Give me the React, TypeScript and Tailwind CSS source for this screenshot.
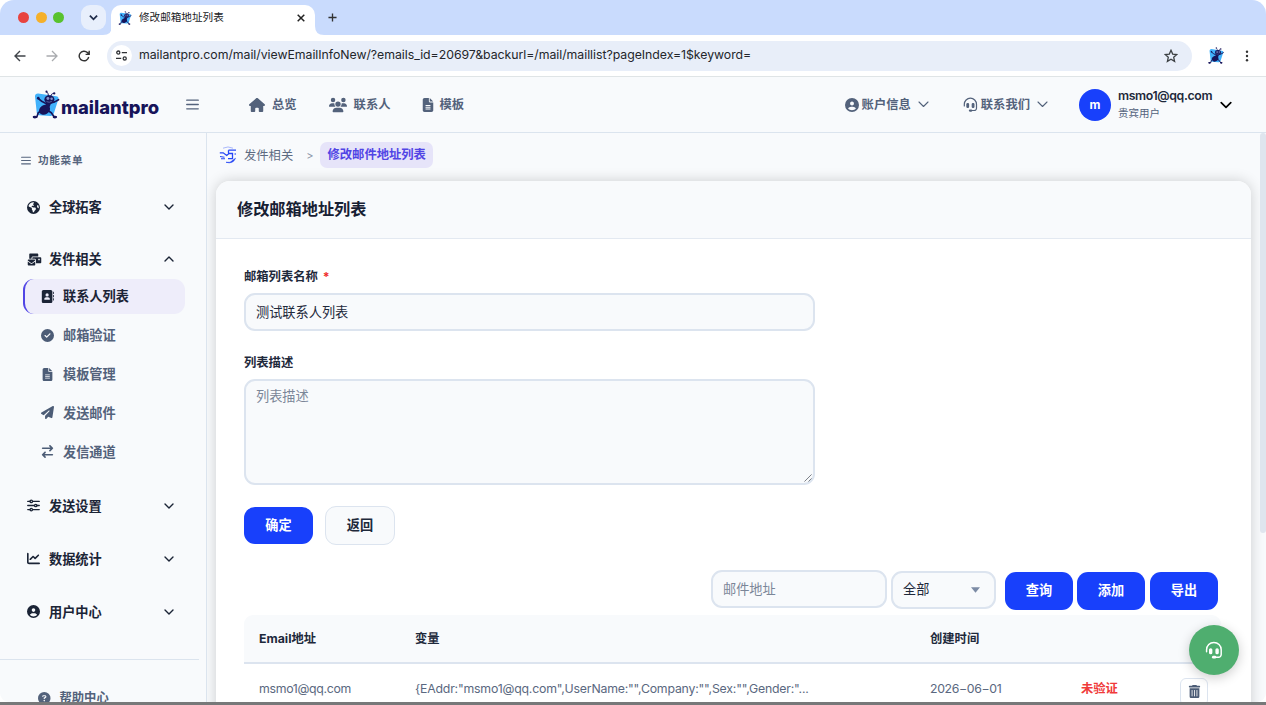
import type { ReactNode } from 'react';
import {
  FaAddressBook, FaArrowRightArrowLeft, FaChartLine, FaCircleCheck, FaCircleQuestion, FaCircleUser,
  FaEarthAmericas, FaEnvelopesBulk, FaFileLines, FaHouse, FaPaperPlane, FaUsers, FaTrashCan,
} from 'react-icons/fa6';

const Chevron = ({ up = false, className = '' }: { up?: boolean; className?: string }) => (
  <svg viewBox="0 0 10 10" className={className} fill="none" stroke="currentColor" strokeWidth="1.4" strokeLinecap="round" strokeLinejoin="round">
    <path d={up ? 'M1 7l4-4 4 4' : 'M1 3l4 4 4-4'} />
  </svg>
);

const ThinChevron = ({ className = '' }: { className?: string }) => (
  <svg viewBox="0 0 11 7" className={className} fill="none" stroke="currentColor" strokeWidth="1.1" strokeLinecap="round" strokeLinejoin="round">
    <path d="M1 1l4.500 4.500L10 1" />
  </svg>
);

const Ant = ({ className = '' }: { className?: string }) => (
  <svg viewBox="0 0 28 30" className={className} fill="none">
    <path d="M2.600 6.500Q2.800 3.500 6 3.700L24.500 6.500Q27.500 7 26.800 9.500L22 24.500Q21.200 27 18.500 26.800L7 26.200Q4.800 26 4.500 24Z" fill="#41b1fb" />
    <g stroke="#17145a" strokeLinecap="round" strokeLinejoin="round">
      <path d="M16.500 7C16.500 4 16 2.500 14.500 1.800M19 7c0-2.500 1.200-3.500 3-3.500" strokeWidth="1" />
      <path d="M15 14.500L10 12 6 8.800M19 13.500l4-1.200 4-2.300M10 21l-4 2.500L4.500 28H2M15.500 21l4 2.500L22.500 28H24" strokeWidth="1.700" />
    </g>
    <ellipse cx="12.500" cy="20.500" rx="6" ry="4.800" transform="rotate(-30 12.500 20.500)" fill="#17145a" />
    <ellipse cx="17.500" cy="9.800" rx="5.200" ry="4.300" fill="#17145a" />
    <path d="M14.500 12h5.500l-2.500 6h-4.500z" fill="#17145a" />
    <circle cx="16" cy="8.800" r="1.500" fill="#8492cc" /><circle cx="19.800" cy="9" r="1.300" fill="#8492cc" />
    <path d="M14.500 12q3 1.500 5.500-.3" stroke="#8492cc" strokeWidth=".6" />
    <circle cx="14.500" cy="1.700" r="1.100" fill="#17145a" /><circle cx="22.500" cy="3.500" r="1.200" fill="#17145a" />
    <circle cx="6" cy="8.500" r="1.400" fill="#17145a" />
    <ellipse cx="2.500" cy="28" rx="2.300" ry="1.400" fill="#17145a" /><ellipse cx="23.200" cy="28" rx="2.300" ry="1.400" fill="#17145a" />
  </svg>
);

const Headset = ({ className = '' }: { className?: string }) => (
  <svg viewBox="0 0 16 16" className={className} fill="none" stroke="currentColor" strokeWidth="1.3" strokeLinecap="round">
    <path d="M1.4 9.5V7.8a6.5 6.5 0 0 1 13 0V12a2.4 2.4 0 0 1-2.4 2.400H9" />
    <rect x="4.2" y="7" width="1.7" height="4.2" rx=".8" fill="currentColor" />
    <rect x="9.9" y="7" width="1.7" height="4.2" rx=".8" fill="currentColor" />
    <path d="M7.4 14.4h1.4" strokeWidth="2.4" />
  </svg>
);

const Sliders = ({ className = '' }: { className?: string }) => (
  <svg viewBox="0 0 14 14" className={className} fill="none" stroke="currentColor" strokeWidth="1.4" strokeLinecap="round">
    <path d="M.8 2.6h2.4M6 2.6h7.2M.8 7h7.2M10.8 7h2.4M.8 11.4h2.4M6 11.4h7.2" />
    <circle cx="4.6" cy="2.6" r="1.3" /><circle cx="9.4" cy="7" r="1.3" /><circle cx="4.6" cy="11.4" r="1.3" />
  </svg>
);

const Bars = ({ className = '' }: { className?: string }) => (
  <svg viewBox="0 0 12 10" className={className} stroke="currentColor" strokeWidth="1.3" strokeLinecap="round">
    <path d="M.7 1h10.6M.7 5h10.6M.7 9h10.6" />
  </svg>
);

const MenuRow = ({ icon, label, up, className }: { icon: ReactNode; label: string; up?: boolean; className: string }) => (
  <div className={`flex h-10 shrink-0 items-center pl-[27px] pr-8 text-[13.2px] font-bold text-[#1b2436] ${className}`}>
    <span className="flex w-[22px] items-center text-[13px]">{icon}</span>
    <span className="pt-[2px]">{label}</span>
    <Chevron up={up} className="ml-auto size-[10px]" />
  </div>
);

const SubRow = ({ icon, label }: { icon: ReactNode; label: string }) => (
  <div className="flex h-[38.7px] shrink-0 items-center pl-[41px] text-[13.2px] font-bold text-[#53627b]">
    <span className="flex w-[22px] items-center text-[13px] text-[#4c5c76]">{icon}</span>
    <span className="pt-[2px]">{label}</span>
  </div>
);

const NavItem = ({ icon, label, className }: { icon: ReactNode; label: string; className: string }) => (
  <div className={`flex items-center ${className}`}>{icon}<span className="pt-px">{label}</span></div>
);

const Primary = ({ children, className = '' }: { children: string; className?: string }) => (
  <button className={`h-[38px] w-[68px] rounded-[11px] bg-[#1840fb] pt-px text-[13.2px] font-bold text-white ${className}`}>{children}</button>
);

function BrowserBar() {
  return (
    <>
      <div className="flex h-[35px] shrink-0 rounded-t-[14px] bg-[#c9dbfd]">
        <div className="flex items-center gap-[6.5px] pl-[18px]">
          <i className="size-[11px] rounded-full bg-[#e8433f]" />
          <i className="size-[11px] rounded-full bg-[#f5b02a]" />
          <i className="size-[11px] rounded-full bg-[#58c22e]" />
        </div>
        <div className="ml-[17px] mt-[5px] flex size-[25px] items-center justify-center rounded-[9px] bg-[#e8effc]">
          <svg viewBox="0 0 10 10" className="size-[9px]" fill="none" stroke="#1f2c4a" strokeWidth="2"><path d="M1 3l4 4 4-4" /></svg>
        </div>
        <svg viewBox="0 0 9 9" className="-mr-px ml-[-3px] size-[9px] self-end fill-white"><path d="M0 9Q9 9 9 0V9Z" /></svg>
        <div className="mt-[5px] flex w-[204px] items-center rounded-t-[10px] bg-white pb-[5px] pl-[7px]">
          <Ant className="h-[14px] w-[14px]" />
          <span className="ml-[7px] pt-px text-[10.6px] text-[#202124]">修改邮箱地址列表</span>
          <svg viewBox="0 0 8 8" className="ml-auto mr-[10px] size-[8px]" stroke="#222" strokeWidth="1.5"><path d="M.7.7l6.6 6.6M7.3.7L.7 7.3" /></svg>
        </div>
        <svg viewBox="0 0 9 9" className="size-[9px] self-end fill-white"><path d="M9 9Q0 9 0 0V9Z" /></svg>
        <svg viewBox="0 0 10 10" className="ml-[4px] mt-[13px] size-[9px]" stroke="#333" strokeWidth="1.5"><path d="M5 .5v9M.5 5h9" /></svg>
      </div>
      <div className="flex h-[42px] shrink-0 items-center border-b border-[#dfe4e6] bg-white text-[#3c4043]">
        <svg viewBox="0 0 12 12" className="ml-[14px] size-[12px]" fill="none" stroke="#40444a" strokeWidth="1.4"><path d="M11.5 6H1M6 1L1 6l5 5" /></svg>
        <svg viewBox="0 0 12 12" className="ml-[20px] size-[12px]" fill="none" stroke="#a9abae" strokeWidth="1.3"><path d="M.5 6H11M6 1l5 5-5 5" /></svg>
        <svg viewBox="0 0 12 12" className="ml-[20px] size-[12px]" fill="none" stroke="#333" strokeWidth="1.4"><path d="M10.7 7A4.8 4.8 0 1 1 9.4 2.6L11 4.2M11.2.8v3.6H7.6" /></svg>
        <div className="ml-[17px] flex h-[30px] w-[1085px] items-center rounded-full bg-[#e8eef9] pl-[4px]">
          <div className="flex size-[21px] items-center justify-center rounded-full bg-white">
            <svg viewBox="0 0 12 12" className="size-[11px]" fill="none" stroke="#303236" strokeWidth="1.4"><circle cx="2.5" cy="2.8" r="1.7" /><path d="M6.3 2.8H12M0 9.2h5.7" /><circle cx="9.5" cy="9.2" r="1.7" /></svg>
          </div>
          <span className="ml-[7px] whitespace-nowrap text-[12.3px] tracking-[-0.035px] text-[#23262b]">mailantpro.com/mail/viewEmailInfoNew/?emails_id=20697&amp;backurl=/mail/maillist?pageIndex=1$keyword=</span>
          <svg viewBox="0 0 14 14" className="ml-auto mr-[14px] size-[14px]" fill="none" stroke="#3c4043" strokeWidth="1.3"><path d="M7 1.3l1.7 3.8 4.1.4-3.1 2.8.9 4.1L7 10.3l-3.6 2.1.9-4.1L1.2 5.5l4.1-.4z" /></svg>
        </div>
        <Ant className="ml-[16px] h-[17px] w-[16px]" />
        <svg viewBox="0 0 4 14" className="ml-[21px] h-[12px] w-[4px] fill-[#333]"><circle cx="2" cy="2" r="1.4" /><circle cx="2" cy="7" r="1.4" /><circle cx="2" cy="12" r="1.4" /></svg>
      </div>
    </>
  );
}

function Header() {
  return (
    <header className="flex h-[56px] shrink-0 items-center border-b border-[#dbe4ee] text-[12.3px] font-bold text-[#53627b]">
      <Ant className="ml-[32px] h-[29px] w-[28px] shrink-0" />
      <span className="mt-[6px] w-[100px] whitespace-nowrap pl-px font-['Inter'] text-[18.4px] font-extrabold leading-none text-[#17145a]">mailantpro</span>
      <Bars className="ml-[26px] h-[11px] w-[13px]" />
      <NavItem className="ml-[50px]" icon={<FaHouse className="mr-[7px] text-[16px]" />} label="总览" />
      <NavItem className="ml-[32px]" icon={<FaUsers className="mr-[7px] text-[18px]" />} label="联系人" />
      <NavItem className="ml-[30px]" icon={<FaFileLines className="mr-[5px] text-[14px]" />} label="模板" />
      <div className="ml-auto flex items-center"><FaCircleUser className="mr-[3px] text-[14px]" /><span className="pt-px">账户信息</span><ThinChevron className="ml-[7px] h-[7px] w-[11px]" /></div>
      <div className="ml-[34px] flex items-center"><Headset className="mr-[3px] size-[15px]" /><span className="pt-px">联系我们</span><ThinChevron className="ml-[7px] h-[7px] w-[11px]" /></div>
      <div className="ml-[31px] flex size-[32px] items-center justify-center rounded-full bg-[#1840fb] text-[12px] text-white">m</div>
      <div className="ml-[7px] flex w-[95px] flex-col whitespace-nowrap">
        <span className="pt-px text-[12.3px] font-semibold leading-[15px] tracking-[-0.36px] text-[#1e293b]">msmo1@qq.com</span>
        <span className="mt-[3px] text-[10.5px] font-normal leading-[16px]">贵宾用户</span>
      </div>
      <Chevron className="ml-[7px] mr-[34px] size-[12px] text-black" />
    </header>
  );
}

function Sidebar() {
  return (
    <aside className="flex w-[207px] shrink-0 flex-col overflow-hidden border-r border-[#dbe4ee]">
      <div className="flex h-[54px] shrink-0 items-center pl-[21px] text-[10.6px] font-semibold tracking-[0.7px] text-[#56657e]">
        <Bars className="mr-[7px] h-[9px] w-[10px]" /><span className="pt-px">功能菜单</span>
      </div>
      <MenuRow className="" icon={<FaEarthAmericas />} label="全球拓客" />
      <MenuRow className="mt-[12px]" icon={<FaEnvelopesBulk className="text-[15px]" />} label="发件相关" up />
      <div className="mb-[2px] ml-[23px] flex h-[35px] w-[162px] shrink-0 items-center rounded-[11px] border-l-[2px] border-[#5145e5] bg-[#eeedfa] pl-[16px] text-[13.2px] font-bold text-[#1b2436]">
        <span className="w-[22px] text-[13px]"><FaAddressBook /></span><span className="pt-px">联系人列表</span>
      </div>
      <SubRow icon={<FaCircleCheck />} label="邮箱验证" />
      <SubRow icon={<FaFileLines />} label="模板管理" />
      <SubRow icon={<FaPaperPlane />} label="发送邮件" />
      <SubRow icon={<FaArrowRightArrowLeft />} label="发信通道" />
      <MenuRow className="mt-[15px]" icon={<Sliders className="size-[13px]" />} label="发送设置" />
      <MenuRow className="mt-[13px]" icon={<FaChartLine />} label="数据统计" />
      <MenuRow className="mt-[13px]" icon={<FaCircleUser />} label="用户中心" />
      <div className="mt-[27px] w-[199px] shrink-0 border-t border-[#dbe4ee]" />
      <div className="mt-[28px] flex h-[20px] shrink-0 items-center pl-[38px] text-[12.3px] font-bold text-[#53627b]">
        <FaCircleQuestion className="mr-[9px] text-[12.5px]" /><span className="pt-px">帮助中心</span>
      </div>
    </aside>
  );
}

function Content() {
  return (
    <main className="relative flex min-w-0 flex-1 overflow-hidden">
      <div className="flex w-[1053px] shrink-0 flex-col">
        <div className="flex h-[48px] shrink-0 items-center pb-[4px] pl-[12px] text-[12.3px] text-[#5d6b82]">
          <svg viewBox="0 0 18 18" className="size-[18px]" fill="none" stroke="#2546f5" strokeWidth="1.3">
            <path d="M4 2.200Q9 -.3 14 2.200" stroke="#aab8fb" strokeWidth="1" />
            <path d="M17 4.200h-7.500M9.500 4.200v3.300h4M.8 6.800h3.400l3.500 2.700 2.300-2h3.500v5.200H9" />
            <path d="M1 10.500l4.500.7M2 12.800h4" strokeWidth="1.1" />
            <path d="M7 16.300h4l5.500-4Q14 18.300 7 16.300z" fill="#2546f5" strokeWidth=".6" />
            <circle cx="16.200" cy="8" r=".8" fill="#2546f5" stroke="none" />
          </svg>
          <span className="ml-[7px] pt-[2px]">发件相关</span>
          <span className="ml-[13px] mt-[3px] text-[11px] text-[#8b96a8]">&gt;</span>
          <span className="ml-[7px] flex h-[26px] items-center rounded-[7px] bg-[#e6e4f9] px-[7px] pt-px font-bold text-[#5145e5]">修改邮件地址列表</span>
        </div>
        <section className="ml-[9px] flex h-[560px] w-[1035px] shrink-0 flex-col rounded-t-[14px] bg-white shadow-[0_0_14px_rgba(0,0,0,0.18)]">
          <div className="flex h-[58px] shrink-0 items-center rounded-t-[14px] border-b border-[#e3e9f1] bg-[#f8fafc] pl-[21px] text-[16.200px] font-bold text-[#172033]">修改邮箱地址列表</div>
          <div className="flex flex-col pl-[28px]">
            <label className="mt-[28px] flex h-[20px] items-center text-[12.300px] font-bold text-[#1e293b]">邮箱列表名称<span className="ml-[5px] text-[#ef2b2b]">*</span></label>
            <div className="mt-[6px] flex h-[38px] w-[571px] items-center rounded-[11px] border-2 border-[#dce4ef] bg-[#f8fafc] pl-[10px] pt-px text-[13.200px] text-[#1e293b]">测试联系人列表</div>
            <label className="mt-[22px] flex h-[20px] items-center text-[12.300px] font-bold text-[#1e293b]">列表描述</label>
            <div className="mt-[6px] flex h-[106px] w-[571px] justify-between rounded-[11px] border-2 border-[#dce4ef] bg-[#f8fafc] pl-[10px] pt-[6px] text-[13.200px] text-[#7b8698]">
              列表描述
              <svg viewBox="0 0 9 9" className="mb-px mr-px size-[8px] self-end" stroke="#5b6068" strokeWidth=".9"><path d="M.5 8.500l8-8M5 8.500L8.500 5" /></svg>
            </div>
            <div className="mt-[21px] flex items-center gap-[12px]">
              <Primary className="!h-[37px] !w-[69px]">确定</Primary>
              <button className="h-[39px] w-[70px] rounded-[11px] border border-[#dce4ef] bg-[#f8fafc] pt-px text-[13.200px] font-bold text-[#1e293b]">返回</button>
            </div>
          </div>
          <div className="mt-[25px] flex h-[40px] items-center pl-[495px] text-[13.200px]">
            <div className="mb-[2px] flex h-[38px] w-[176px] items-center rounded-[11px] border-2 border-[#dce4ef] bg-[#f8fafc] pl-[10px] pt-px text-[#7b8698]">邮件地址</div>
            <div className="ml-[4px] flex h-[38px] w-[105px] items-center rounded-[11px] border-2 border-[#dce4ef] bg-[#f8fafc] pl-[10px] text-[#1e293b]">
              全部<svg viewBox="0 0 10 6" className="ml-auto mr-[14px] h-[6px] w-[9px] fill-[#7c8ba5]"><path d="M0 0h10L5 6z" /></svg>
            </div>
            <Primary className="ml-[9px] mt-px">查询</Primary>
            <Primary className="ml-[4px] mt-px">添加</Primary>
            <Primary className="ml-[5px] mt-px">导出</Primary>
          </div>
          <div className="ml-[28px] mt-[5px] grid h-[49px] w-[977px] shrink-0 grid-cols-[156px_515px_151px_99px_1fr] items-center rounded-t-[9px] border-b-2 border-[#dce4ef] bg-[#f8fafc] pl-[15px] pt-[2px] text-[12.300px] font-bold text-[#1e293b]">
            <span>Email地址</span><span>变量</span><span>创建时间</span>
          </div>
          <div className="ml-[28px] grid h-[49px] w-[977px] shrink-0 grid-cols-[156px_515px_151px_99px_1fr] items-center pl-[15px] text-[12.300px] text-[#5a6880]">
            <span className="pt-px tracking-[-0.3px]">msmo1@qq.com</span>
            <span className="pt-px tracking-[-0.2px]">{'{EAddr:"msmo1@qq.com",UserName:"",Company:"",Sex:"",Gender:"...'}</span>
            <span className="pt-px tracking-[-0.35px]">2026−06−01</span>
            <span className="pt-px font-bold text-[#f03a3a]">未验证</span>
            <span className="mt-[6px] flex size-[28px] items-center justify-center rounded-[6px] border border-[#dce4ef] bg-white text-[13px] text-[#4c5c76]"><FaTrashCan /></span>
          </div>
        </section>
      </div>
      <div className="h-[400px] w-[6px] rounded-full bg-[#dfe5ee]" />
      <div className="absolute left-[982px] top-[492px] flex size-[50px] items-center justify-center rounded-full bg-[#4fae6f] text-white shadow-[0_3px_12px_rgba(0,0,0,0.2)]"><Headset className="size-[18px]" /></div>
    </main>
  );
}

export default function App() {
  return (
    <div className="flex h-[705px] w-[1266px] flex-col overflow-hidden bg-white font-['Inter','Noto_Sans_CJK_SC',sans-serif]">
      <BrowserBar />
      <div className="flex h-[625px] shrink-0 flex-col overflow-hidden rounded-b-[9px] bg-[#f8fafc]">
        <Header />
        <div className="flex min-h-0 flex-1"><Sidebar /><Content /></div>
      </div>
      <div className="h-[3px] shrink-0 bg-[#777879]" />
    </div>
  );
}
